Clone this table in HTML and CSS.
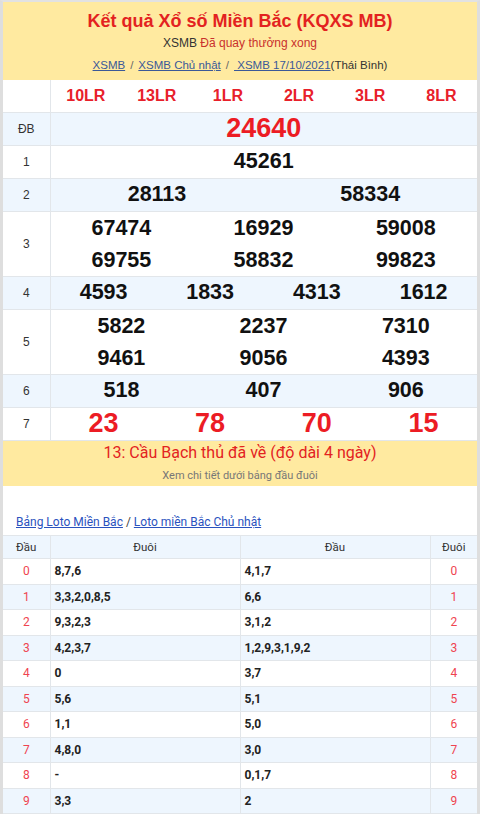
FILE: index.html
```html
<!DOCTYPE html>
<html lang="vi">
<head>
<meta charset="utf-8">
<title>KQXS MB</title>
<link rel="stylesheet" href="styles.css">
</head>
<body>
<div class="page">
  <header class="head">
    <h1 class="title">Kết quả Xổ số Miền Bắc (KQXS MB)</h1>
    <p class="status"><span class="code">XSMB</span> Đã quay thưởng xong</p>
    <p class="crumbs"><a href="#">XSMB</a><span class="sep">/</span><a href="#">XSMB Chủ nhật</a><span class="sep">/</span><a href="#">&nbsp;XSMB 17/10/2021</a>(Thái Bình)</p>
  </header>

  <table class="prizes">
    <colgroup><col class="c-label"><col span="12"></colgroup>
    <tr class="lr">
      <td class="label"></td>
      <td colspan="2">10LR</td><td colspan="2">13LR</td><td colspan="2">1LR</td>
      <td colspan="2">2LR</td><td colspan="2">3LR</td><td colspan="2">8LR</td>
    </tr>
    <tr class="alt">
      <td class="label">ĐB</td>
      <td colspan="12" class="big red">24640</td>
    </tr>
    <tr>
      <td class="label">1</td>
      <td colspan="12">45261</td>
    </tr>
    <tr class="alt">
      <td class="label">2</td>
      <td colspan="6">28113</td><td colspan="6">58334</td>
    </tr>
    <tr class="double">
      <td class="label">3</td>
      <td colspan="4"><div>67474</div><div>69755</div></td>
      <td colspan="4"><div>16929</div><div>58832</div></td>
      <td colspan="4"><div>59008</div><div>99823</div></td>
    </tr>
    <tr class="alt">
      <td class="label">4</td>
      <td colspan="3">4593</td><td colspan="3">1833</td><td colspan="3">4313</td><td colspan="3">1612</td>
    </tr>
    <tr class="double">
      <td class="label">5</td>
      <td colspan="4"><div>5822</div><div>9461</div></td>
      <td colspan="4"><div>2237</div><div>9056</div></td>
      <td colspan="4"><div>7310</div><div>4393</div></td>
    </tr>
    <tr class="alt">
      <td class="label">6</td>
      <td colspan="4">518</td><td colspan="4">407</td><td colspan="4">906</td>
    </tr>
    <tr>
      <td class="label">7</td>
      <td colspan="3" class="big red">23</td><td colspan="3" class="big red">78</td>
      <td colspan="3" class="big red">70</td><td colspan="3" class="big red">15</td>
    </tr>
  </table>

  <div class="banner">
    <p class="banner-title">13: Cầu Bạch thủ đã về (độ dài 4 ngày)</p>
    <p class="banner-sub">Xem chi tiết dưới bảng đầu đuôi</p>
  </div>

  <p class="loto-links"><a href="#">Bảng Loto Miền Bắc</a> / <a href="#">Loto miền Bắc Chủ nhật</a></p>

  <table class="loto">
    <colgroup><col class="c-head"><col><col><col class="c-head"></colgroup>
    <tr class="loto-head"><th>Đầu</th><th>Đuôi</th><th>Đầu</th><th>Đuôi</th></tr>
    <tr><td class="num">0</td><td>8,7,6</td><td>4,1,7</td><td class="num">0</td></tr>
    <tr class="alt"><td class="num">1</td><td>3,3,2,0,8,5</td><td>6,6</td><td class="num">1</td></tr>
    <tr><td class="num">2</td><td>9,3,2,3</td><td>3,1,2</td><td class="num">2</td></tr>
    <tr class="alt"><td class="num">3</td><td>4,2,3,7</td><td>1,2,9,3,1,9,2</td><td class="num">3</td></tr>
    <tr><td class="num">4</td><td>0</td><td>3,7</td><td class="num">4</td></tr>
    <tr class="alt"><td class="num">5</td><td>5,6</td><td>5,1</td><td class="num">5</td></tr>
    <tr><td class="num">6</td><td>1,1</td><td>5,0</td><td class="num">6</td></tr>
    <tr class="alt"><td class="num">7</td><td>4,8,0</td><td>3,0</td><td class="num">7</td></tr>
    <tr><td class="num">8</td><td>-</td><td>0,1,7</td><td class="num">8</td></tr>
    <tr class="alt"><td class="num">9</td><td>3,3</td><td>2</td><td class="num">9</td></tr>
  </table>
</div>
</body>
</html>
```

FILE: styles.css
```css
* { box-sizing: border-box; }

html, body {
  margin: 0;
  padding: 0;
  background: #ffffff;
}

body {
  font-family: "Liberation Sans", Arial, sans-serif;
  color: #222;
}

.page {
  width: 480px;
  border-left: 3px solid #dedede;
  border-right: 3px solid #dedede;
  border-top: 2px solid #e2e2e2;
}

/* ---------- header ---------- */
.head {
  background: #ffeaa0;
  text-align: center;
  padding: 8px 0 4px;
}

.title {
  margin: 0;
  font-size: 18px;
  line-height: 22px;
  font-weight: bold;
  color: #e3221f;
}

.status {
  margin: 0;
  font-size: 12px;
  line-height: 22px;
  color: #c9302c;
}

.status .code { color: #333; }

.crumbs {
  margin: 0;
  font-size: 11.5px;
  line-height: 22px;
  color: #333;
}

.crumbs a {
  color: #3b5998;
  text-decoration: underline;
}

.crumbs .sep {
  color: #666;
  padding: 0 5px;
}

/* ---------- prize table ---------- */
.prizes {
  width: 100%;
  border-collapse: collapse;
  table-layout: fixed;
}

.prizes .c-label { width: 47px; }

.prizes td {
  height: 33px;
  padding: 0;
  text-align: center;
  vertical-align: middle;
  border-bottom: 1px solid #e2e6ea;
  font-size: 21.5px;
  font-weight: bold;
  color: #111;
  white-space: nowrap;
}

.prizes tr.alt td { background: #eef6fe; }

.prizes td.label {
  font-size: 12px;
  font-weight: normal;
  color: #333;
  border-right: 1px solid #e2e6ea;
}

.prizes tr.lr td {
  height: 32px;
  font-size: 16px;
  color: #e8202a;
}

.prizes tr.double td { height: 65px; }

.prizes tr.double td div { line-height: 32px; }

.prizes td.big { font-size: 27px; }

.prizes td.red { color: #ec1c24; }

/* ---------- banner ---------- */
.banner {
  background: #ffeaa0;
  text-align: center;
  font-family: Roboto, "Liberation Sans", sans-serif;
  padding: 1px 0 2px;
}

.banner-title {
  margin: 0;
  font-size: 16px;
  line-height: 22px;
  color: #e3221f;
}

.banner-sub {
  margin: 4px 0 0;
  font-size: 11px;
  line-height: 16px;
  color: #777;
}

/* ---------- loto ---------- */
.loto-links {
  margin: 28px 0 5px;
  padding-left: 13px;
  font-family: Roboto, "Liberation Sans", sans-serif;
  font-size: 12px;
  line-height: 16px;
  color: #444;
}

.loto-links a {
  color: #2a52be;
  text-decoration: underline;
}

.loto {
  width: 100%;
  border-collapse: collapse;
  table-layout: fixed;
  font-family: Roboto, "Liberation Sans", sans-serif;
  font-size: 12px;
}

.loto .c-head { width: 47px; }

.loto th,
.loto td {
  border: 1px solid #e2e6ea;
  padding: 0 4px;
  height: 25.5px;
  vertical-align: middle;
}

.loto tr th:first-child,
.loto tr td:first-child { border-left: none; }
.loto tr th:last-child,
.loto tr td:last-child { border-right: none; }

.loto th {
  height: 23.5px;
  background: #eef6fe;
  font-weight: normal;
  color: #333;
  text-align: center;
  font-size: 11.5px;
}

.loto td {
  font-weight: bold;
  color: #222;
}

.loto td.num {
  text-align: center;
  font-weight: normal;
  color: #ef4450;
}

.loto tr.alt td { background: #eef6fe; }
```
